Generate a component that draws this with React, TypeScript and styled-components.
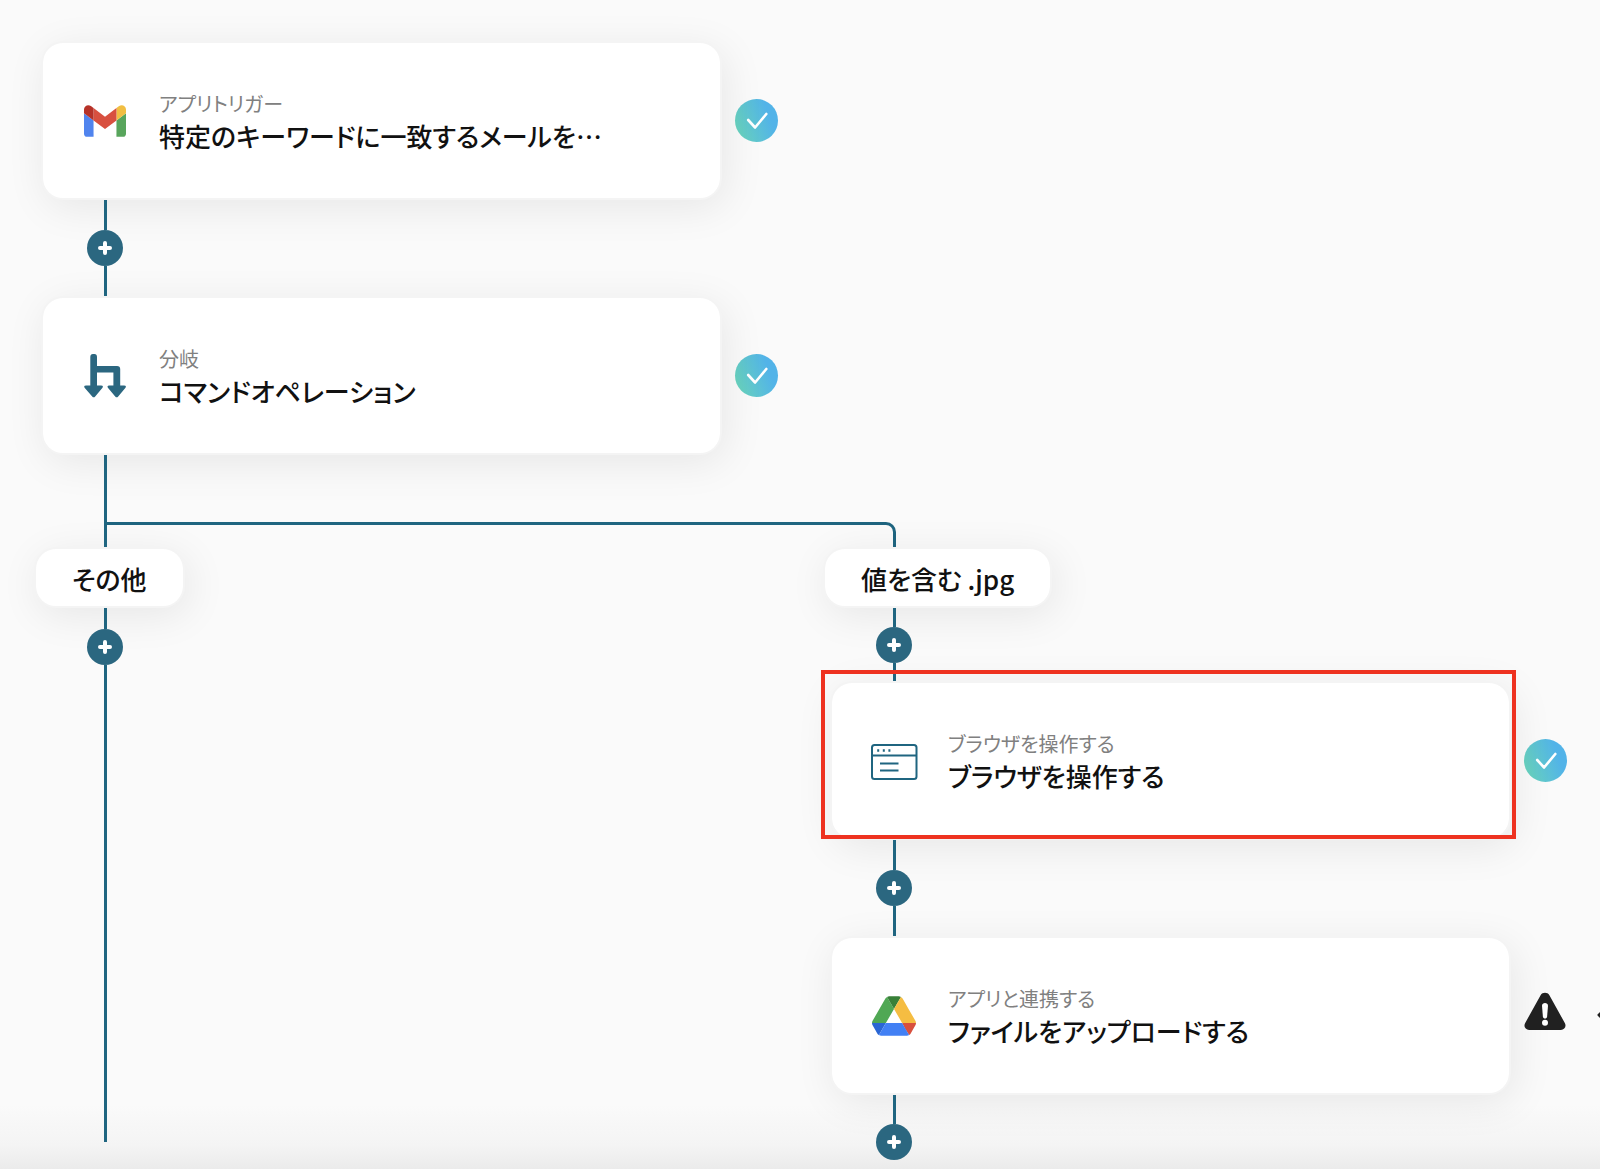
import React from "react";
import styled, { createGlobalStyle, css } from "styled-components";

const teal = "#2b6780";
const line = "#1f6580";

const GlobalStyle = createGlobalStyle`
  *, *::before, *::after { box-sizing: border-box; }
  body {
    margin: 0;
    background: #fafafa;
    color: #111;
    font-family: "Noto Sans CJK JP", "Noto Sans", sans-serif;
    font-feature-settings: "palt";
  }
  h2, p { margin: 0; }
`;

const Canvas = styled.main`
  display: flex;
  flex-direction: column;
  min-height: 100vh;
  padding: 41px 0 9px 41px;
  overflow: hidden;
  background: linear-gradient(to top, #ebebeb, #f4f4f4 24px, #fafafa 64px);
`;

const NodeRow = styled.div`
  display: flex;
  flex: none;
  align-items: center;
  gap: 13px;
`;

const Card = styled.article`
  position: relative;
  display: flex;
  flex: none;
  align-items: center;
  gap: 30px;
  width: 681px;
  height: 159px;
  padding: 0 38px;
  border: 2px solid #f4f4f4;
  border-radius: 22px;
  background: #fff;
  background-clip: padding-box;
  box-shadow: 4px 8px 40px rgba(0, 0, 0, 0.08);
`;

const Highlight = styled.span`
  position: absolute;
  z-index: 2;
  inset: -13px -7px -1px -11px;
  border: 4px solid #ee3220;
  pointer-events: none;
`;

const IconSlot = styled.span`
  display: flex;
  flex: none;
  justify-content: center;
  width: 48px;
`;

const CardText = styled.div`
  min-width: 0;
`;

const Kind = styled.p`
  color: #808080;
  font-size: 20px;
  font-weight: 400;
  line-height: 30px;
`;

const Title = styled.h2`
  font-size: 26px;
  font-weight: 500;
  line-height: 34px;
  white-space: nowrap;
`;

const Status = styled.span`
  display: flex;
  flex: none;
  width: 43px;
  height: 43px;
  border-radius: 50%;
  background: linear-gradient(70deg, #6cd8b8, #52b3e8 75%);
`;

const Alert = styled.span`
  display: flex;
  flex: none;
  gap: 31px;
`;

const Stem = styled.span<{ $length?: number }>`
  position: relative;
  z-index: 1;
  width: 3px;
  margin-left: 63px;
  background: ${line};
  ${({ $length }) =>
    $length
      ? css`
          flex: none;
          height: ${$length}px;
        `
      : css`
          flex: 1;
          margin-bottom: 18px;
        `}
`;

const AddButton = styled.button`
  position: relative;
  z-index: 1;
  display: flex;
  flex: none;
  align-items: center;
  justify-content: center;
  width: 36px;
  height: 36px;
  margin-left: 46px;
  padding: 0;
  border: 0;
  border-radius: 50%;
  background: ${teal};
  cursor: pointer;
`;

const Fork = styled.div`
  display: flex;
  flex: none;
  align-items: flex-end;
`;

const Arm = styled.span`
  flex: none;
  width: 789px;
  height: 25px;
  border: solid ${line};
  border-width: 3px 3px 0 0;
  border-top-right-radius: 10px;
`;

const Branches = styled.div`
  display: flex;
  flex: 1;
`;

const Branch = styled.section`
  display: flex;
  flex: none;
  flex-direction: column;
  align-items: flex-start;
`;

const OtherBranch = styled(Branch)`
  width: 789px;
`;

const Condition = styled.h2`
  flex: none;
  height: 61px;
  margin-left: -7px;
  padding: 2px 36px 0;
  border: 2px solid #f4f4f4;
  border-radius: 22px;
  background: #fff;
  background-clip: padding-box;
  box-shadow: 4px 8px 40px rgba(0, 0, 0, 0.08);
  font-size: 26px;
  font-weight: 500;
  line-height: 55px;
  white-space: nowrap;
`;

const Add = () => (
  <AddButton type="button" aria-label="追加">
    <svg width="16" height="16" viewBox="0 0 16 16" stroke="#fff" strokeWidth="4" strokeLinecap="round">
      <path d="M8 3v10M3 8h10" />
    </svg>
  </AddButton>
);

const Connector = () => (
  <>
    <Stem $length={30} />
    <Add />
    <Stem $length={30} />
  </>
);

const Done = () => (
  <Status role="img" aria-label="完了">
    <svg width="43" height="43" viewBox="0 0 43 43" fill="none" stroke="#fff" strokeWidth="2.6" strokeLinecap="round" strokeLinejoin="round">
      <path d="M13.2 21l6.9 7.5L31.3 15" />
    </svg>
  </Status>
);

const Warning = () => (
  <Alert role="img" aria-label="警告">
    <svg width="42" height="48" viewBox="0 0 42 48">
      <path
        d="M16.6 3.2C18.5 0 23.5 0 25.4 3.2L40.8 31c1.9 3.4-.2 7-3.9 7H5.1C1.4 38-.7 34.4 1.2 31z"
        fill="#212121"
      />
      <path d="M18 13.8c0-3.6 6-3.6 6 0l-.9 11c-.2 2.4-4 2.4-4.2 0z" fill="#fff" />
      <circle cx="21" cy="30.7" r="3" fill="#fff" />
    </svg>
    <svg width="20" height="48" viewBox="0 0 20 48">
      <path d="M2 23l9-8v16z" fill="#212121" stroke="#212121" strokeWidth="3" strokeLinejoin="round" />
    </svg>
  </Alert>
);

const GmailIcon = () => (
  <svg width="42" height="32" viewBox="52 42 88 66">
    <path fill="#5084ee" d="M58 108h14V74L52 59v43c0 3.32 2.69 6 6 6" />
    <path fill="#58a55c" d="M120 108h14c3.32 0 6-2.69 6-6V59l-20 15" />
    <path fill="#f1be42" d="M120 48v26l20-15v-8c0-7.42-8.47-11.65-14.4-7.2" />
    <path fill="#d85040" d="M72 74V48l24 18 24-18v26L96 92" />
    <path fill="#b63228" d="M52 51v8l20 15V48l-5.6-4.2c-5.94-4.45-14.4-.22-14.4 7.2" />
  </svg>
);

const BranchIcon = () => (
  <svg width="42" height="44" viewBox="0 0 42 44" fill={teal}>
    <path d="M6.3 3Q6.3 0 9 0h1.4q2.6 0 2.6 3v9H33q3.2 0 3.2 3v16.4H40q3 .2 1.3 2.7l-7.1 8.3q-1.5 1.7-3 0l-7.1-8.3q-1.7-2.5 1.3-2.7h4V18.6H13v12.8h4q3 .2 1.3 2.7l-7.1 8.3q-1.5 1.7-3 0L.8 34.1q-1.7-2.5 1.3-2.7h4.2z" />
  </svg>
);

const BrowserIcon = () => (
  <svg width="48" height="38" viewBox="0 0 48 38" fill="none" stroke={line} strokeWidth="2">
    <rect x="2" y="3" width="44.5" height="34" rx="2.5" />
    <path d="M2 13.5h44.5M10 21.5h18.5M10 28.5h18.5" />
    <path d="M7.2 8.5h2M12.8 8.5h2M18.4 8.5h2" strokeWidth="2.4" />
  </svg>
);

const DriveIcon = () => (
  <svg width="44" height="40" viewBox="0 0 87.3 78">
    <path fill="#2a66d4" d="M6.6 66.85l3.85 6.65c.8 1.4 1.95 2.5 3.3 3.3L27.5 53H0c0 1.55.4 3.1 1.2 4.5z" />
    <path fill="#50a854" d="M43.65 25L29.9 1.2c-1.35.8-2.5 1.9-3.3 3.3l-25.4 44A9 9 0 0 0 0 53h27.5z" />
    <path fill="#d8503e" d="M73.55 76.8c1.35-.8 2.5-1.9 3.3-3.3l1.6-2.75 7.65-13.25c.8-1.4 1.2-2.95 1.2-4.5H59.8l5.85 11.5z" />
    <path fill="#388038" d="M43.65 25L57.4 1.2C56.05.4 54.5 0 52.9 0H34.4c-1.6 0-3.15.45-4.5 1.2z" />
    <path fill="#4280f4" d="M59.8 53H27.5L13.75 76.8c1.35.8 2.9 1.2 4.5 1.2h50.8c1.6 0 3.15-.45 4.5-1.2z" />
    <path fill="#f5bd42" d="M73.4 26.5l-12.7-22c-.8-1.4-1.95-2.5-3.3-3.3L43.65 25 59.8 53h27.45c0-1.55-.4-3.1-1.2-4.5z" />
  </svg>
);

type NodeProps = {
  icon: React.ReactNode;
  kind: string;
  title: string;
  status: React.ReactNode;
  highlighted?: boolean;
};

const FlowNode = ({ icon, kind, title, status, highlighted }: NodeProps) => (
  <NodeRow>
    <Card>
      <IconSlot aria-hidden="true">{icon}</IconSlot>
      <CardText>
        <Kind>{kind}</Kind>
        <Title>{title}</Title>
      </CardText>
      {highlighted && <Highlight />}
    </Card>
    {status}
  </NodeRow>
);

export default function App() {
  return (
    <>
      <GlobalStyle />
      <Canvas>
        <FlowNode icon={<GmailIcon />} kind="アプリトリガー" title="特定のキーワードに一致するメールを…" status={<Done />} />
        <Connector />
        <FlowNode icon={<BranchIcon />} kind="分岐" title="コマンドオペレーション" status={<Done />} />
        <Fork>
          <Stem $length={92} />
          <Arm />
        </Fork>
        <Branches>
          <OtherBranch>
            <Condition>その他</Condition>
            <Stem $length={21} />
            <Add />
            <Stem />
          </OtherBranch>
          <Branch>
            <Condition>値を含む .jpg</Condition>
            <Stem $length={19} />
            <Add />
            <Stem $length={18} />
            <FlowNode
              icon={<BrowserIcon />}
              kind="ブラウザを操作する"
              title="ブラウザを操作する"
              status={<Done />}
              highlighted
            />
            <Connector />
            <FlowNode
              icon={<DriveIcon />}
              kind="アプリと連携する"
              title="ファイルをアップロードする"
              status={<Warning />}
            />
            <Stem $length={29} />
            <Add />
          </Branch>
        </Branches>
      </Canvas>
    </>
  );
}
